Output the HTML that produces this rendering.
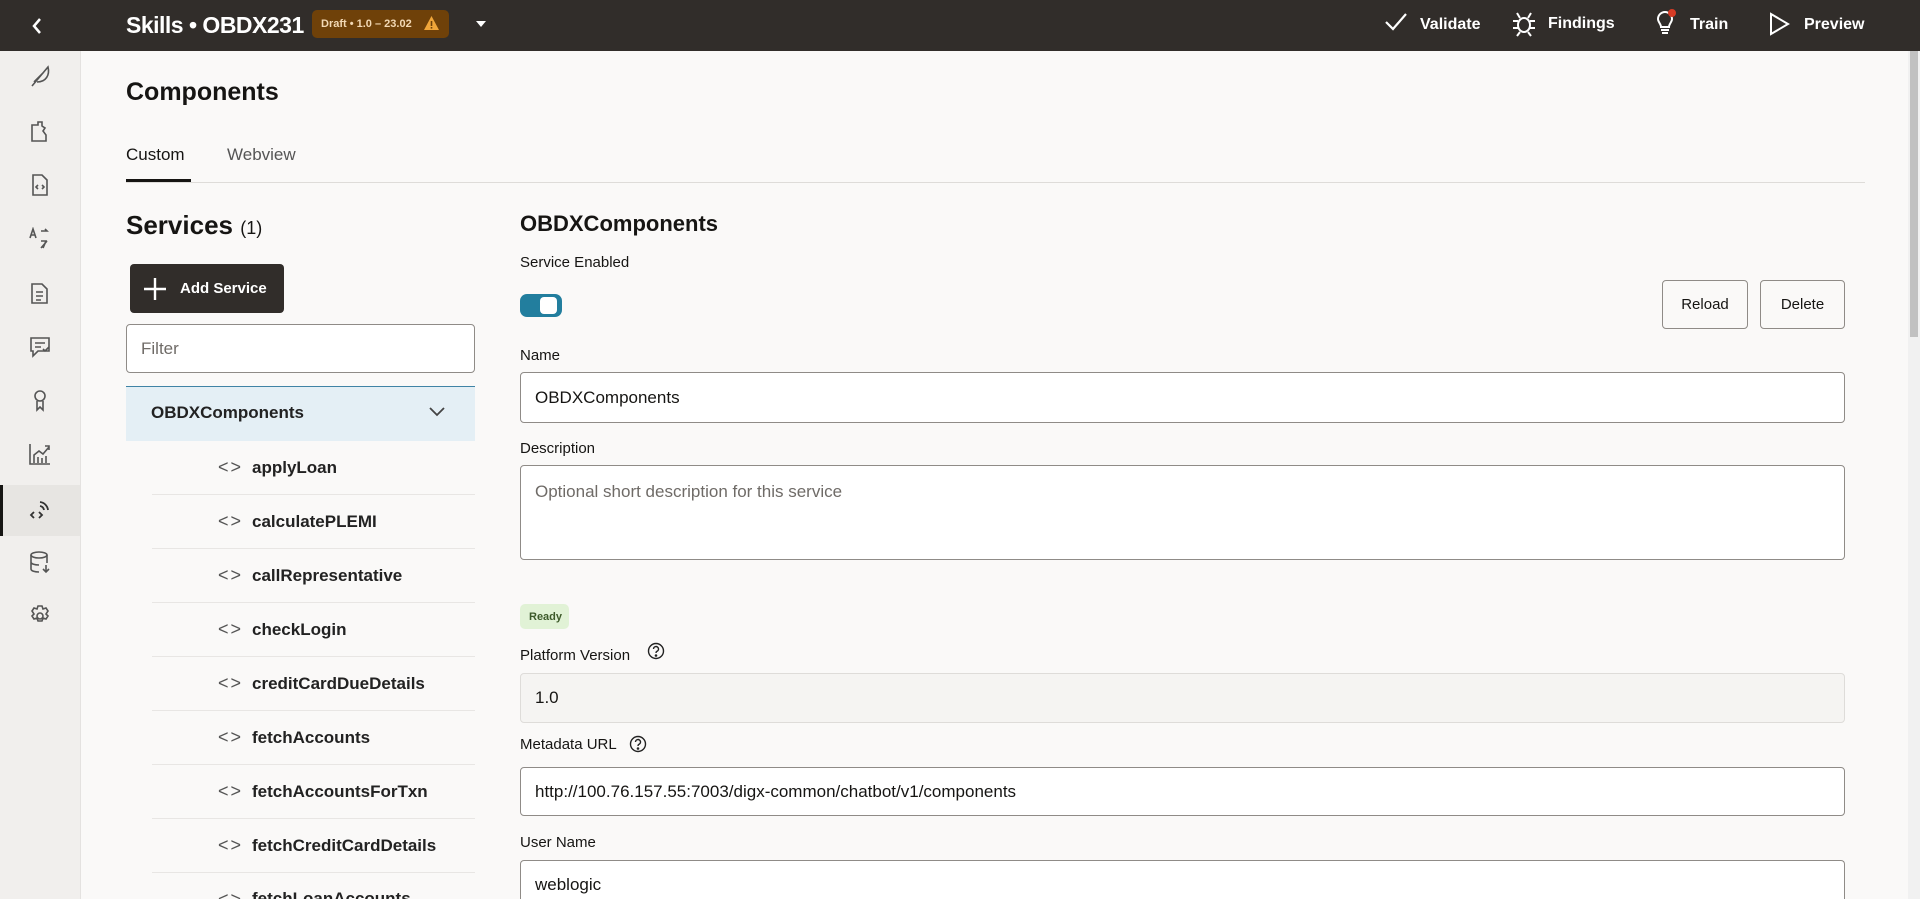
<!DOCTYPE html>
<html style="width:1920px;height:899px;overflow:hidden"><head><meta charset="utf-8"><style>
*{box-sizing:border-box;margin:0;padding:0}
body{width:1920px;height:899px;overflow:hidden;background:#faf9f8;font-family:"Liberation Sans",sans-serif;color:#161513;position:relative}
.a{position:absolute}
.hdr{left:0;top:0;width:1920px;height:51px;background:#312d2a;color:#fff}
.side{left:0;top:51px;width:81px;height:848px;background:#f1efed;border-right:1px solid #e4e2e0}
.si{position:absolute;left:28px;width:24px;height:24px}
.lbl{font-size:15px;color:#161513}
.inp{border:1px solid #8f8b87;border-radius:4px;background:#fff;font-size:17px;padding-left:14px;display:flex;align-items:center}
.row{position:absolute;left:152px;width:323px;height:54px;border-bottom:1px solid #e8e6e4;font-size:17px;display:flex;align-items:center;font-weight:bold;color:#222}
.row span.c{position:absolute;left:66px;color:#555;font-size:18px;letter-spacing:2px;font-weight:normal}
.row span.t{position:absolute;left:100px}
.btn{border:1px solid #8f8b87;border-radius:4px;background:#faf9f8;font-size:15px;display:flex;align-items:center;justify-content:center}
</style></head><body>
<div class="a hdr">
 <svg class="a" style="left:30px;top:16px" width="14" height="20" viewBox="0 0 14 20"><path d="M10 3L4 10l6 7" stroke="#fff" stroke-width="2.5" fill="none"/></svg>
 <div class="a" style="left:126px;top:12px;font-size:23px;font-weight:bold;letter-spacing:-0.5px">Skills • OBDX231</div>
 <div class="a" style="left:312px;top:10px;width:137px;height:28px;background:#6f4109;border-radius:5px;font-size:11px;font-weight:bold;color:#f3d9b5;padding:8px 0 0 9px">Draft • 1.0 – 23.02
  <svg class="a" style="left:111px;top:5px" width="17" height="16" viewBox="0 0 17 16"><path d="M8.5 1L16 15H1z" fill="#f0a63a"/><rect x="7.7" y="6" width="1.6" height="5" fill="#6f4109"/><rect x="7.7" y="12" width="1.6" height="1.6" fill="#6f4109"/></svg></div>
 <svg class="a" style="left:476px;top:21px" width="10" height="6"><path d="M0 0h10L5 6z" fill="#fff"/></svg>
 <svg class="a" style="left:1384px;top:12px" width="24" height="20" viewBox="0 0 24 20"><path d="M2 10l7 7L22 2" stroke="#fff" stroke-width="2.2" fill="none"/></svg>
 <div class="a" style="left:1420px;top:16px;font-size:16px;font-weight:bold">Validate</div>
 <svg class="a" style="left:1512px;top:11px" width="24" height="26" viewBox="0 0 24 26" fill="none" stroke="#fff" stroke-width="2"><ellipse cx="12" cy="14" rx="6" ry="7"/><path d="M6 10H1M18 10h5M6 17H1M18 17h5M8 7L5 2M16 7l3-5M8 21l-3 4M16 21l3 4"/></svg>
 <div class="a" style="left:1548px;top:15px;font-size:16px;font-weight:bold">Findings</div>
 <svg class="a" style="left:1653px;top:9px" width="26" height="28" viewBox="0 0 26 28" fill="none" stroke="#fff" stroke-width="2"><path d="M5 10a7 7 0 0 1 14 0c0 3-3 5-3 8H8c0-3-3-5-3-8zM8 21h8M9 24h6"/><circle cx="19" cy="4" r="4" fill="#d63b25" stroke="none"/></svg>
 <div class="a" style="left:1690px;top:16px;font-size:16px;font-weight:bold">Train</div>
 <svg class="a" style="left:1769px;top:12px" width="22" height="24" viewBox="0 0 22 24"><path d="M2 2l17 10L2 22z" stroke="#fff" stroke-width="2" fill="none"/></svg>
 <div class="a" style="left:1804px;top:16px;font-size:16px;font-weight:bold">Preview</div>
</div>
<div class="a side">
 <svg class="si" style="top:13px" viewBox="0 0 24 24" fill="none" stroke="#555" stroke-width="1.6"><path d="M4 22L20 3c2 8-2 15-11 15M6 18l9-9"/></svg>
 <svg class="si" style="top:68px" viewBox="0 0 24 24" fill="none" stroke="#555" stroke-width="1.6"><path d="M4 6h6V3h4v4l3 2-2 3 3 4v6H4z"/></svg>
 <svg class="si" style="top:122px" viewBox="0 0 24 24" fill="none" stroke="#555" stroke-width="1.6"><path d="M5 2h9l5 5v15H5zM10 12l-2 2 2 2M14 12l2 2-2 2"/></svg>
 <svg class="si" style="top:176px" viewBox="0 0 24 24" fill="none" stroke="#555" stroke-width="1.6"><path d="M2 11l3-9 3 9M3 8h4M13 4h6l-2-2M13 14h5l-3 7M19 14l-6 7"/></svg>
 <svg class="si" style="top:230px" viewBox="0 0 24 24" fill="none" stroke="#555" stroke-width="1.6"><path d="M4 3h10l5 5v14H4zM8 11h7M8 15h7M8 19h5"/></svg>
 <svg class="si" style="top:284px" viewBox="0 0 24 24" fill="none" stroke="#555" stroke-width="1.6"><path d="M3 3h18v13H10l-5 5v-5H3zM7 8h10M7 12h6M15 14l2 2 4-4"/></svg>
 <svg class="si" style="top:337px" viewBox="0 0 24 24" fill="none" stroke="#555" stroke-width="1.6"><circle cx="12" cy="8" r="5"/><path d="M9 13v9l3-3 3 3v-9"/></svg>
 <svg class="si" style="top:391px" viewBox="0 0 24 24" fill="none" stroke="#555" stroke-width="1.6"><path d="M2 2v20h20M6 21v-8l5-4 4 3 6-7M10 21v-6M14 21v-5M18 21v-7M17 4h4v4"/></svg>
 <div class="a" style="left:0;top:434px;width:80px;height:51px;background:#e7e5e2;border-left:3px solid #161513"></div>
 <svg class="si" style="top:447px" viewBox="0 0 24 24" fill="none" stroke="#333" stroke-width="1.8"><path d="M6 14l-3 3 3 3M11 14l3 3-3 3M12 4a9 9 0 0 1 8 8M12 8a5 5 0 0 1 4 4"/></svg>
 <svg class="si" style="top:499px" viewBox="0 0 24 24" fill="none" stroke="#555" stroke-width="1.6"><ellipse cx="11" cy="5" rx="8" ry="3"/><path d="M3 5v14c0 2 4 3 8 3M19 5v8M3 12c0 2 4 3 8 3M18 15v7M15 19l3 3 3-3"/></svg>
 <svg class="si" style="top:553px" viewBox="0 0 24 24" fill="none" stroke="#555" stroke-width="1.6"><circle cx="12" cy="12" r="3"/><path d="M10 2h4l1 3 3-1 2 3-2 3 2 2-2 3-3-1-1 3h-4l-1-3-3 1-2-3 2-2-2-3 2-3 3 1z"/></svg>
</div>
<div class="a" style="left:1908px;top:51px;width:12px;height:848px;background:#f1f1f1"></div>
<div class="a" style="left:1910px;top:51px;width:8px;height:286px;background:#c1c1c1"></div>

<div class="a" style="left:126px;top:78px;font-size:25px;font-weight:bold">Components</div>
<div class="a" style="left:126px;top:145px;font-size:17px">Custom</div>
<div class="a" style="left:227px;top:145px;font-size:17px;color:#555">Webview</div>
<div class="a" style="left:126px;top:182px;width:1739px;height:1px;background:#dedcd9"></div>
<div class="a" style="left:126px;top:179px;width:65px;height:3px;background:#161513"></div>

<div class="a" style="left:126px;top:210px;font-size:26px;font-weight:bold">Services <span style="font-size:18px;font-weight:normal">(1)</span></div>
<div class="a" style="left:130px;top:264px;width:154px;height:49px;background:#312d2a;border-radius:4px;color:#fff;font-size:15px;font-weight:bold">
 <svg class="a" style="left:14px;top:14px" width="22" height="22"><path d="M11 0v22M0 11h22" stroke="#fff" stroke-width="2.4"/></svg>
 <div class="a" style="left:50px;top:16px">Add Service</div></div>
<div class="a inp" style="left:126px;top:324px;width:349px;height:49px;color:#6f6b67;font-size:17px">Filter</div>
<div class="a" style="left:126px;top:386px;width:349px;height:55px;background:#e4eff5;border-top:1px solid #3f83a5;font-size:17px;font-weight:bold;color:#222">
 <div class="a" style="left:25px;top:16px">OBDXComponents</div>
 <svg class="a" style="left:303px;top:20px" width="16" height="10"><path d="M1 1l7 7 7-7" stroke="#444" stroke-width="1.8" fill="none"/></svg></div>
<div class="row" style="top:441px"><span class="c">&lt;&gt;</span><span class="t">applyLoan</span></div>
<div class="row" style="top:495px"><span class="c">&lt;&gt;</span><span class="t">calculatePLEMI</span></div>
<div class="row" style="top:549px"><span class="c">&lt;&gt;</span><span class="t">callRepresentative</span></div>
<div class="row" style="top:603px"><span class="c">&lt;&gt;</span><span class="t">checkLogin</span></div>
<div class="row" style="top:657px"><span class="c">&lt;&gt;</span><span class="t">creditCardDueDetails</span></div>
<div class="row" style="top:711px"><span class="c">&lt;&gt;</span><span class="t">fetchAccounts</span></div>
<div class="row" style="top:765px"><span class="c">&lt;&gt;</span><span class="t">fetchAccountsForTxn</span></div>
<div class="row" style="top:819px"><span class="c">&lt;&gt;</span><span class="t">fetchCreditCardDetails</span></div>
<div class="row" style="top:873px;height:26px;align-items:flex-end;overflow:hidden;border:none"><span class="c" style="top:16px">&lt;&gt;</span><span class="t" style="top:16px">fetchLoanAccounts</span></div>

<div class="a" style="left:520px;top:211px;font-size:22px;font-weight:bold">OBDXComponents</div>
<div class="a lbl" style="left:520px;top:254px">Service Enabled</div>
<div class="a" style="left:520px;top:294px;width:42px;height:23px;background:#227e9e;border-radius:7px"><div class="a" style="left:20px;top:3px;width:17px;height:17px;background:#fff;border-radius:4px"></div></div>
<div class="a btn" style="left:1662px;top:280px;width:86px;height:49px">Reload</div>
<div class="a btn" style="left:1760px;top:280px;width:85px;height:49px">Delete</div>
<div class="a lbl" style="left:520px;top:347px">Name</div>
<div class="a inp" style="left:520px;top:372px;width:1325px;height:51px">OBDXComponents</div>
<div class="a lbl" style="left:520px;top:440px">Description</div>
<div class="a inp" style="left:520px;top:465px;width:1325px;height:95px;align-items:flex-start;padding-top:16px;color:#6f6b67">Optional short description for this service</div>
<div class="a" style="left:520px;top:604px;width:49px;height:25px;background:#e1f2d6;border-radius:5px;font-size:11px;font-weight:bold;color:#3d5a2a;padding:7px 0 0 9px">Ready</div>
<div class="a lbl" style="left:520px;top:647px">Platform Version</div>
<svg class="a" style="left:647px;top:642px" width="18" height="18" viewBox="0 0 18 18" fill="none" stroke="#222" stroke-width="1.4"><circle cx="9" cy="9" r="7.5"/><path d="M6.5 7a2.5 2.5 0 1 1 3.5 2.3c-.8.4-1 .9-1 1.7"/><circle cx="9" cy="13.5" r=".6" fill="#222"/></svg>
<div class="a inp" style="left:520px;top:673px;width:1325px;height:50px;background:#f5f4f2;border-color:#dedcd9">1.0</div>
<div class="a lbl" style="left:520px;top:736px">Metadata URL</div>
<svg class="a" style="left:629px;top:735px" width="18" height="18" viewBox="0 0 18 18" fill="none" stroke="#222" stroke-width="1.4"><circle cx="9" cy="9" r="7.5"/><path d="M6.5 7a2.5 2.5 0 1 1 3.5 2.3c-.8.4-1 .9-1 1.7"/><circle cx="9" cy="13.5" r=".6" fill="#222"/></svg>
<div class="a inp" style="left:520px;top:767px;width:1325px;height:49px">http://100.76.157.55:7003/digx-common/chatbot/v1/components</div>
<div class="a lbl" style="left:520px;top:834px">User Name</div>
<div class="a inp" style="left:520px;top:860px;width:1325px;height:39px;align-items:flex-start;padding-top:14px;border-bottom:none;border-radius:4px 4px 0 0">weblogic</div>
</body></html>
